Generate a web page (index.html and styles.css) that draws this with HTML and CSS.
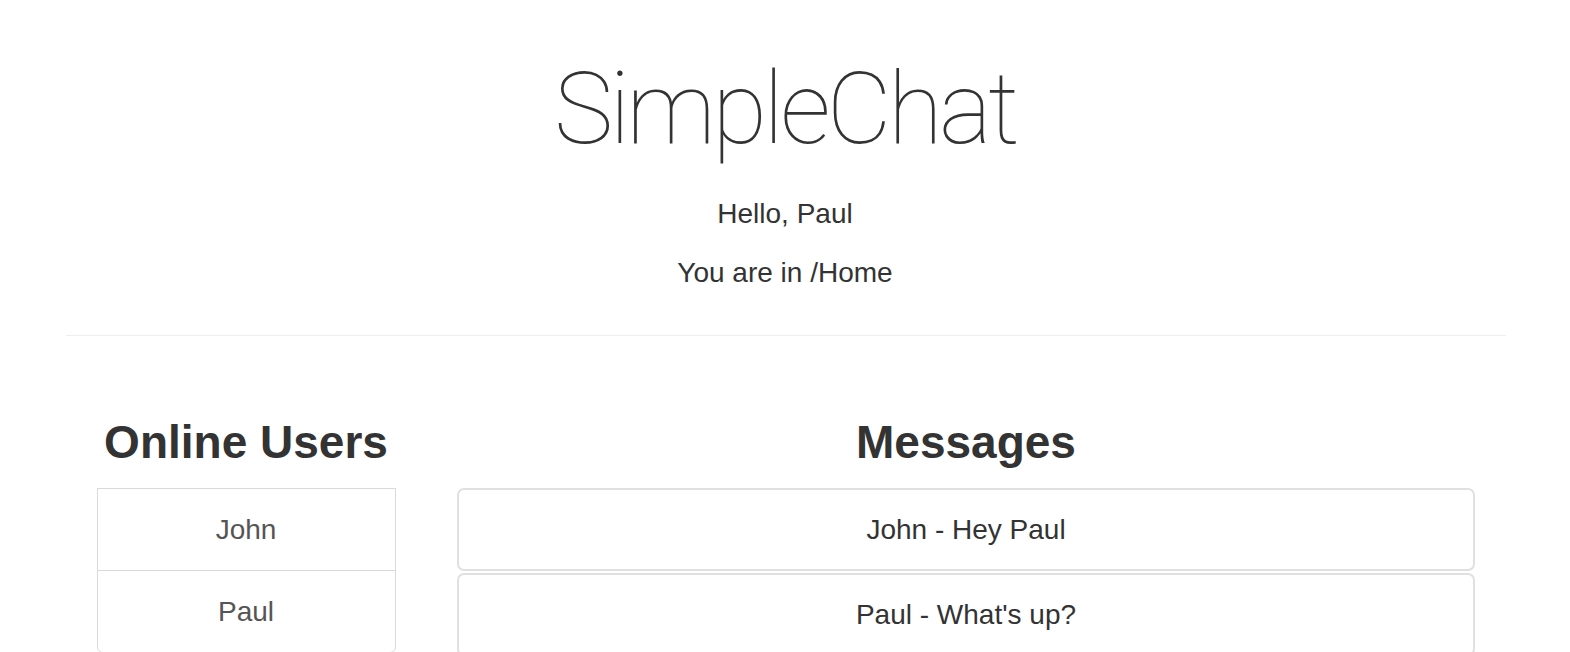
FILE: index.html
```html
<!DOCTYPE html>
<html lang="en">
<head>
<meta charset="utf-8">
<title>SimpleChat</title>
<link rel="stylesheet" href="styles.css">
</head>
<body>
  <header class="header">
    <h1 class="title">SimpleChat</h1>
    <p class="greeting">Hello, Paul</p>
    <p class="room">You are in /Home</p>
  </header>
  <hr class="divider">
  <main class="row">
    <section class="col-users">
      <h2 class="section-title">Online Users</h2>
      <ul class="user-list">
        <li class="user-item">John</li>
        <li class="user-item">Paul</li>
      </ul>
    </section>
    <section class="col-messages">
      <h2 class="section-title">Messages</h2>
      <div class="message-list">
        <div class="message">John - Hey Paul</div>
        <div class="message">Paul - What's up?</div>
      </div>
    </section>
  </main>
</body>
</html>
```

FILE: styles.css
```css
html, body {
  margin: 0;
  padding: 0;
  background: #fff;
}

body {
  font-family: "Liberation Sans", Arial, Helvetica, sans-serif;
  color: #333;
  overflow: hidden;
}

.header {
  text-align: center;
}

.title {
  margin: 49px 0 0;
  font-family: Roboto, "Liberation Sans", sans-serif;
  font-weight: 100;
  font-size: 100px;
  line-height: 120px;
  color: #333;
  letter-spacing: -3.7px;
}

.greeting,
.room {
  margin: 0;
  font-size: 28px;
  line-height: 40px;
}

.greeting {
  margin-top: 25px;
}

.room {
  margin-top: 19px;
}

.divider {
  width: 1440px;
  margin: 42px 0 0 66px;
  border: 0;
  border-top: 1px solid #eee;
  height: 0;
}

.row {
  width: 1440px;
  margin: 81px 0 0 66px;
  display: grid;
  grid-template-columns: 360px 1080px;
}

.section-title {
  margin: 0 0 21px;
  font-size: 46px;
  font-weight: 700;
  line-height: 50px;
  text-align: center;
  color: #333;
}

.user-list {
  list-style: none;
  margin: 0 auto;
  padding: 0;
  width: 299px;
}

.user-item {
  box-sizing: border-box;
  height: 83px;
  margin-bottom: -1px;
  border: 1px solid #d9d9d9;
  display: flex;
  align-items: center;
  justify-content: center;
  font-size: 28px;
  color: #555;
}

.user-item:last-child {
  border-radius: 0 0 6px 6px;
}

.message-list {
  width: 1018px;
  margin: 0 auto;
  display: flex;
  flex-direction: column;
  gap: 2px;
}

.message {
  box-sizing: border-box;
  height: 83px;
  border: 2px solid #e0e0e0;
  border-radius: 7px;
  display: flex;
  align-items: center;
  justify-content: center;
  font-size: 28px;
  color: #333;
}
```
